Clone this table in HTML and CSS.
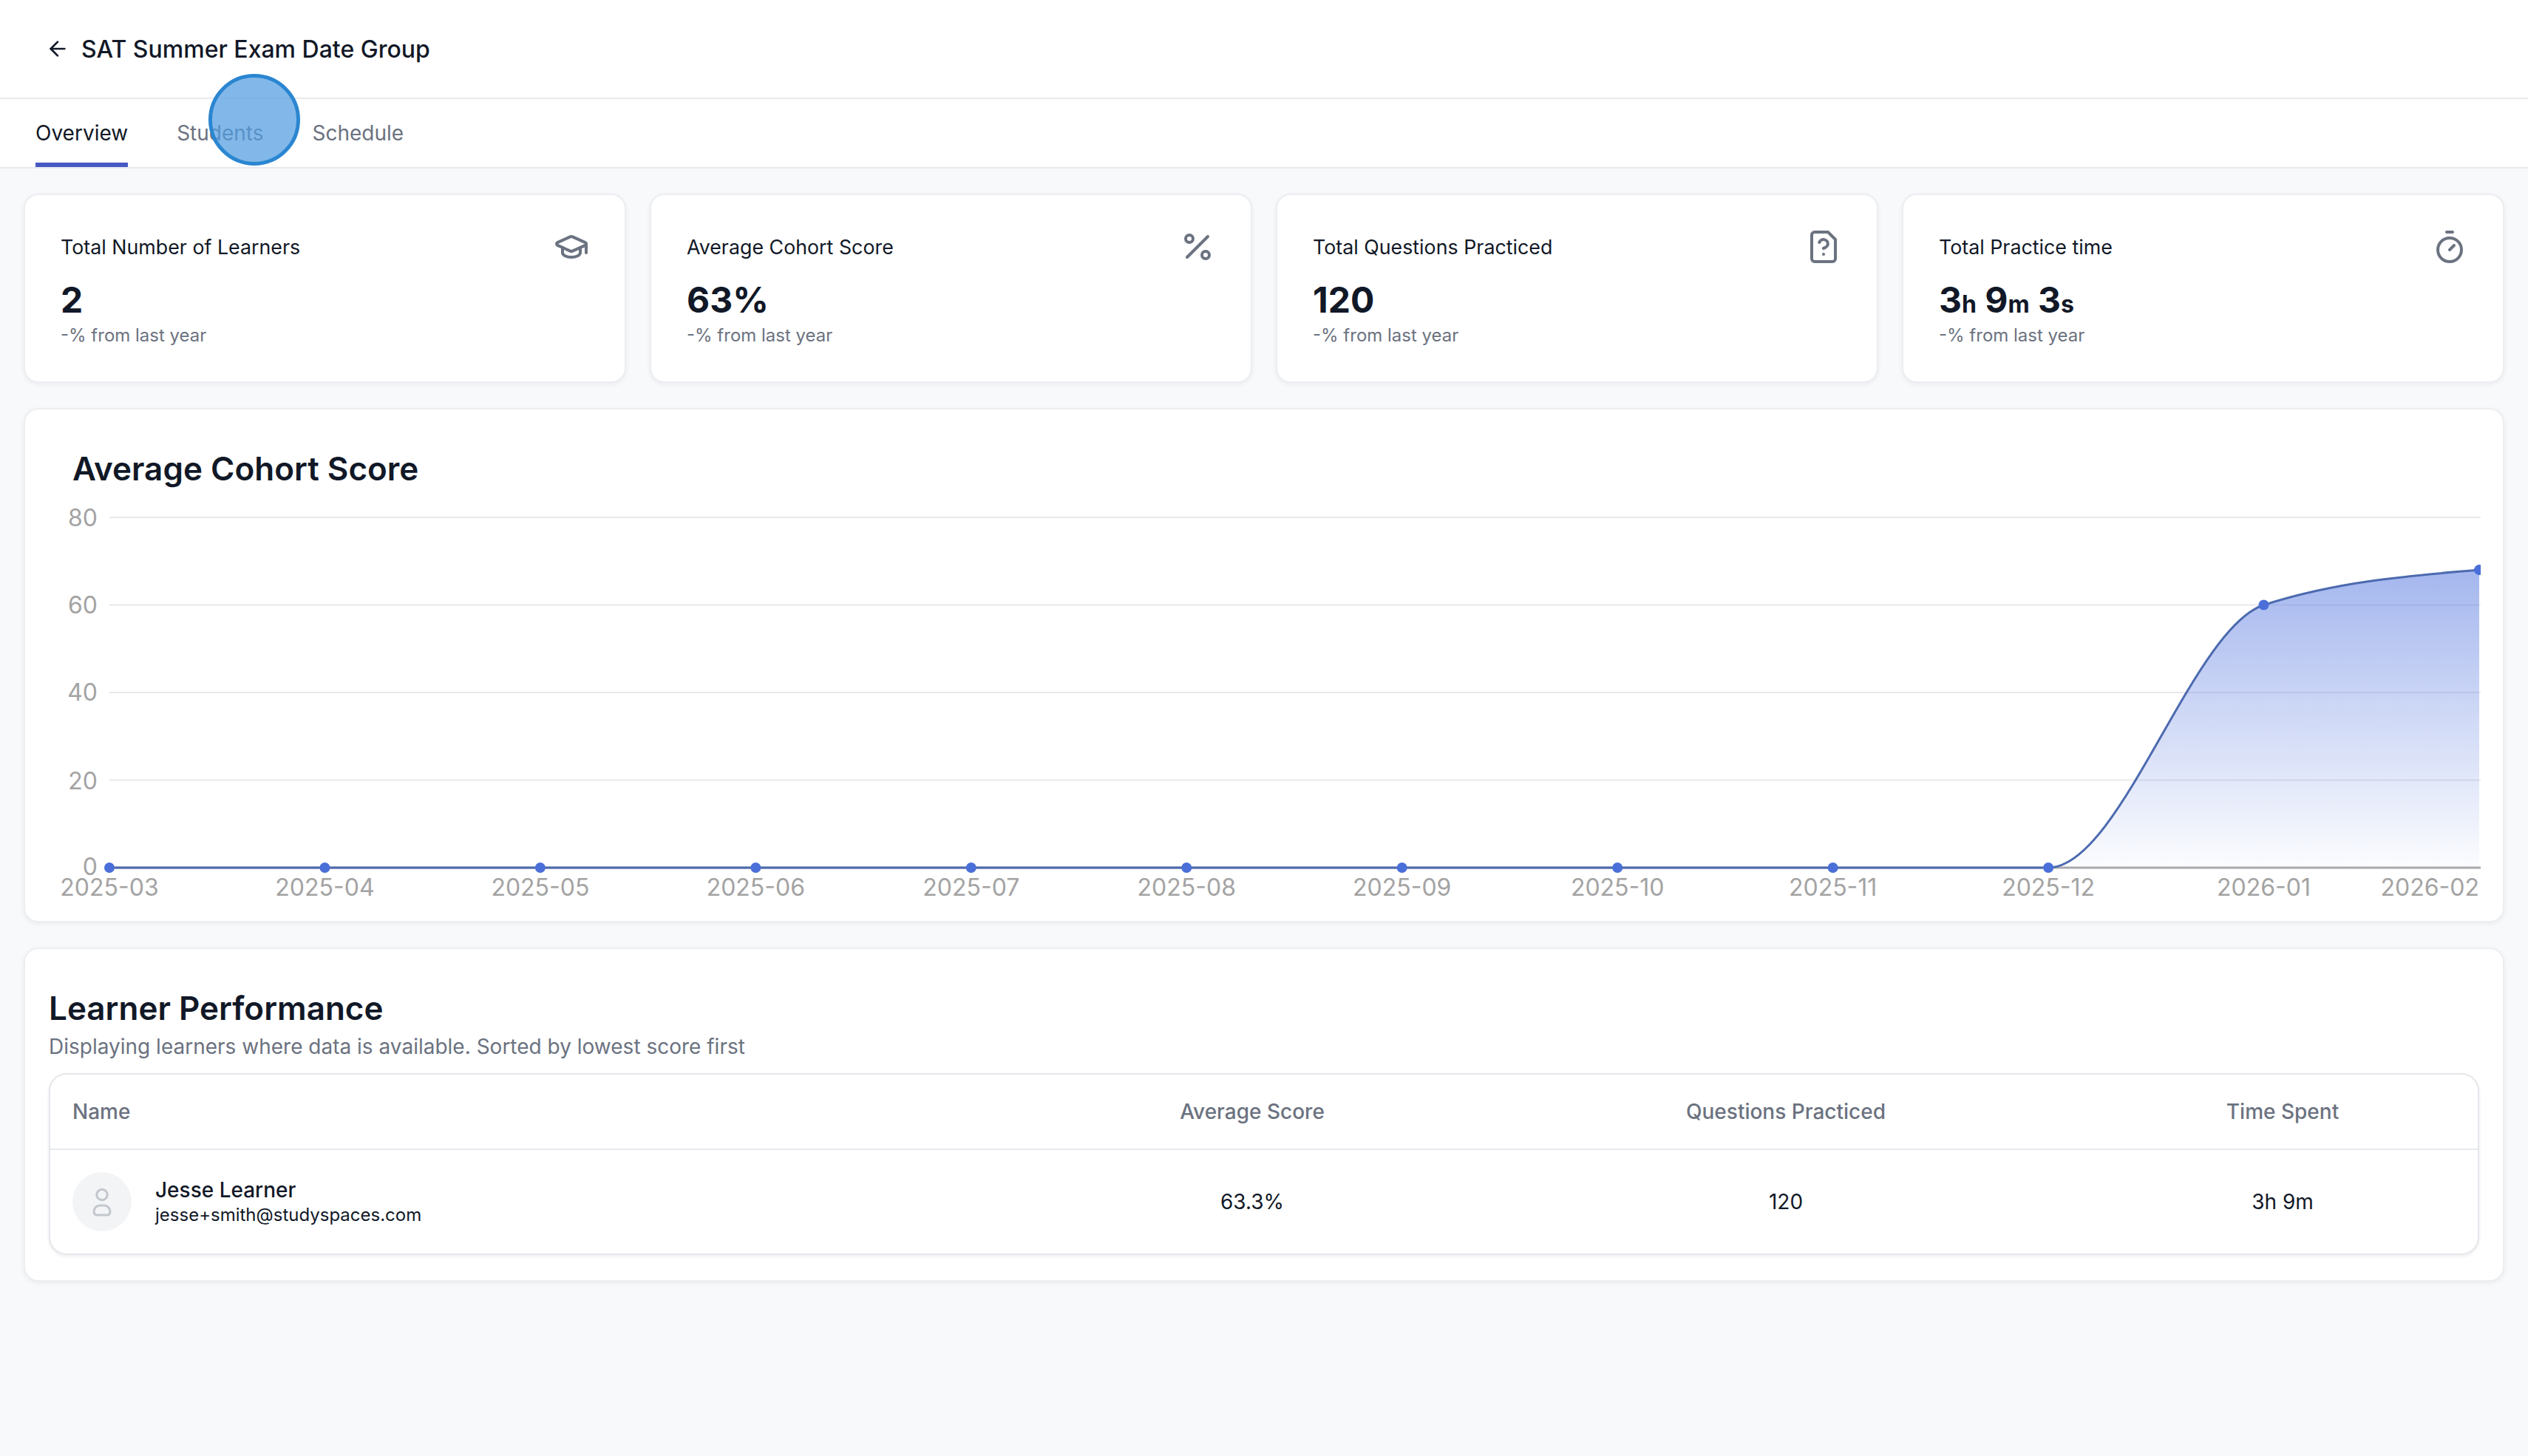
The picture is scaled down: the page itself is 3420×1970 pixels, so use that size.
FILE: index.html
```html
<!DOCTYPE html>
<html lang="en">
<head>
<meta charset="utf-8">
<title>SAT Summer Exam Date Group</title>
<link rel="stylesheet" href="styles.css">
</head>
<body>
<header class="topbar">
  <span class="back">
    <svg viewBox="0 0 24 24" width="16" height="16" fill="none" stroke="currentColor" stroke-width="2" stroke-linecap="round" stroke-linejoin="round"><path d="m12 19-7-7 7-7"/><path d="M19 12H5"/></svg>
  </span>
  <h1 class="page-title">SAT Summer Exam Date Group</h1>
</header>
<nav class="tabs">
  <span class="tab active">Overview</span>
  <span class="tab">Students</span>
  <span class="tab">Schedule</span>
</nav>
<span class="click-dot"></span>

<main class="content">
  <section class="stats">
    <div class="card stat">
      <div class="stat-head">
        <span class="stat-title">Total Number of Learners</span>
        <svg class="stat-icon" viewBox="0 0 24 24" fill="none" stroke="currentColor" stroke-width="2" stroke-linecap="round" stroke-linejoin="round"><path d="M21.42 10.922a1 1 0 0 0-.019-1.838L12.83 5.18a2 2 0 0 0-1.66 0L2.6 9.08a1 1 0 0 0 0 1.832l8.57 3.908a2 2 0 0 0 1.66 0z"/><path d="M22 10v6"/><path d="M6 12.5V16a6 3 0 0 0 12 0v-3.5"/></svg>
      </div>
      <div class="stat-value">2</div>
      <div class="stat-sub">-% from last year</div>
    </div>
    <div class="card stat">
      <div class="stat-head">
        <span class="stat-title">Average Cohort Score</span>
        <svg class="stat-icon" viewBox="0 0 24 24" fill="none" stroke="currentColor" stroke-width="2" stroke-linecap="round" stroke-linejoin="round"><line x1="19" x2="5" y1="5" y2="19"/><circle cx="6.5" cy="6.5" r="2.5"/><circle cx="17.5" cy="17.5" r="2.5"/></svg>
      </div>
      <div class="stat-value">63%</div>
      <div class="stat-sub">-% from last year</div>
    </div>
    <div class="card stat">
      <div class="stat-head">
        <span class="stat-title">Total Questions Practiced</span>
        <svg class="stat-icon" viewBox="0 0 24 24" fill="none" stroke="currentColor" stroke-width="2" stroke-linecap="round" stroke-linejoin="round"><path d="M15 2H6a2 2 0 0 0-2 2v16a2 2 0 0 0 2 2h12a2 2 0 0 0 2-2V7z"/><path d="M9.1 9a3 3 0 0 1 5.82 1c0 2-3 3-3 3"/><path d="M12 17h.01"/></svg>
      </div>
      <div class="stat-value">120</div>
      <div class="stat-sub">-% from last year</div>
    </div>
    <div class="card stat">
      <div class="stat-head">
        <span class="stat-title">Total Practice time</span>
        <svg class="stat-icon" viewBox="0 0 24 24" fill="none" stroke="currentColor" stroke-width="2" stroke-linecap="round" stroke-linejoin="round"><line x1="10" x2="14" y1="2" y2="2"/><line x1="12" x2="15" y1="14" y2="11"/><circle cx="12" cy="14" r="8"/></svg>
      </div>
      <div class="stat-value">3<span class="unit">h</span> 9<span class="unit">m</span> 3<span class="unit">s</span></div>
      <div class="stat-sub">-% from last year</div>
    </div>
  </section>

  <section class="card chart-card">
    <h2 class="chart-title">Average Cohort Score</h2>
    <svg class="chart" viewBox="0 0 1645 280" width="1645" height="280">
      <defs>
        <linearGradient id="areaFill" x1="0" y1="0" x2="0" y2="1">
          <stop offset="0" stop-color="#5a7be0" stop-opacity="0.55"/>
          <stop offset="1" stop-color="#5a7be0" stop-opacity="0.02"/>
        </linearGradient>
      </defs>
      <g class="grid">
        <line x1="41" x2="1645" y1="19" y2="19"/>
        <line x1="41" x2="1645" y1="78.25" y2="78.25"/>
        <line x1="41" x2="1645" y1="137.5" y2="137.5"/>
        <line x1="41" x2="1645" y1="196.75" y2="196.75"/>
      </g>
      <g class="ylabels">
        <text x="33" y="25">80</text>
        <text x="33" y="84">60</text>
        <text x="33" y="143">40</text>
        <text x="33" y="203">20</text>
        <text x="33" y="261">0</text>
      </g>
      <path class="area" d="M1352.55,256 C1401.13,256 1449.69,94.06 1498.27,78.25 C1546.85,62.45 1595.42,58.5 1644,54.55 L1644,256 Z"/>
      <line class="axis" x1="41" x2="1645" y1="256" y2="256"/>
      <path class="line" d="M41,256 L1352.55,256 C1401.13,256 1449.69,94.06 1498.27,78.25 C1546.85,62.45 1595.42,58.5 1644,54.55"/>
      <g class="dots">
        <circle cx="41" cy="256" r="3.5"/>
        <circle cx="186.73" cy="256" r="3.5"/>
        <circle cx="332.45" cy="256" r="3.5"/>
        <circle cx="478.18" cy="256" r="3.5"/>
        <circle cx="623.91" cy="256" r="3.5"/>
        <circle cx="769.64" cy="256" r="3.5"/>
        <circle cx="915.36" cy="256" r="3.5"/>
        <circle cx="1061.09" cy="256" r="3.5"/>
        <circle cx="1206.82" cy="256" r="3.5"/>
        <circle cx="1352.55" cy="256" r="3.5"/>
        <circle cx="1498.27" cy="78.25" r="3.5"/>
        <circle cx="1644" cy="54.55" r="3.5"/>
      </g>
      <g class="xlabels">
        <text x="41" y="275">2025-03</text>
        <text x="186.73" y="275">2025-04</text>
        <text x="332.45" y="275">2025-05</text>
        <text x="478.18" y="275">2025-06</text>
        <text x="623.91" y="275">2025-07</text>
        <text x="769.64" y="275">2025-08</text>
        <text x="915.36" y="275">2025-09</text>
        <text x="1061.09" y="275">2025-10</text>
        <text x="1206.82" y="275">2025-11</text>
        <text x="1352.55" y="275">2025-12</text>
        <text x="1498.27" y="275">2026-01</text>
        <text class="last" x="1644" y="275">2026-02</text>
      </g>
    </svg>
  </section>

  <section class="card perf-card">
    <h2 class="perf-title">Learner Performance</h2>
    <p class="perf-sub">Displaying learners where data is available. Sorted by lowest score first</p>
    <div class="table">
      <div class="row head">
        <div class="cell name-cell">Name</div>
        <div class="cell center">Average Score</div>
        <div class="cell center">Questions Practiced</div>
        <div class="cell center">Time Spent</div>
      </div>
      <div class="row body-row">
        <div class="cell name-cell">
          <span class="avatar">
            <svg viewBox="0 0 20 20" width="24" height="24" fill="none" stroke="currentColor" stroke-width="1.3" stroke-linecap="round" stroke-linejoin="round"><circle cx="10" cy="6" r="3"/><path d="M7 17.5h6a1.5 1.5 0 0 0 1.5-1.5v-.6a3.3 3.3 0 0 0-3.3-3.3H8.8a3.3 3.3 0 0 0-3.3 3.3v.6A1.5 1.5 0 0 0 7 17.5z"/></svg>
          </span>
          <span class="who">
            <span class="who-name">Jesse Learner</span>
            <span class="who-mail">jesse+smith@studyspaces.com</span>
          </span>
        </div>
        <div class="cell center">63.3%</div>
        <div class="cell center">120</div>
        <div class="cell center">3h 9m</div>
      </div>
    </div>
  </section>
</main>
</body>
</html>
```
FILE: styles.css
```css
html {
  zoom: 2;
}

body {
  margin: 0;
  min-height: 985px;
  position: relative;
  font-family: Inter, "Noto Sans", "Liberation Sans", sans-serif;
  background: #f8f9fb;
  color: #111827;
}

.topbar {
  box-sizing: border-box;
  height: 67px;
  background: #fff;
  border-bottom: 1px solid #e8eaee;
  display: flex;
  align-items: center;
  gap: 8px;
  padding-left: 31px;
}

.back {
  display: flex;
  color: #111827;
}

.page-title {
  margin: 0;
  font-size: 16px;
  font-weight: 500;
}

.tabs {
  box-sizing: border-box;
  height: 47px;
  background: #fff;
  border-bottom: 1px solid #e8eaee;
  display: flex;
  gap: 33px;
  padding-left: 24px;
}

.tab {
  box-sizing: border-box;
  display: flex;
  align-items: center;
  padding-top: 3px;
  font-size: 14px;
  color: #6b7280;
  border-bottom: 3px solid transparent;
}

.tab.active {
  color: #111827;
  border-bottom-color: #4659c4;
}

.click-dot {
  position: absolute;
  left: 141px;
  top: 50px;
  width: 62px;
  height: 62px;
  box-sizing: border-box;
  border-radius: 50%;
  background: rgba(82, 156, 225, 0.72);
  border: 2.5px solid #2b86d1;
}

.content {
  padding: 17px 16px 16px;
  display: flex;
  flex-direction: column;
  gap: 17px;
}

.card {
  background: #fff;
  border: 1px solid #eceef1;
  border-radius: 10px;
  box-shadow: 0 1px 3px rgba(16, 24, 40, 0.06);
}

.stats {
  display: grid;
  grid-template-columns: repeat(4, 1fr);
  gap: 16px;
}

.stat {
  padding: 25px 24px 23px;
}

.stat-head {
  display: flex;
  justify-content: space-between;
  align-items: center;
  height: 20px;
}

.stat-title {
  font-size: 13.4px;
  font-weight: 400;
}

.stat-icon {
  width: 24px;
  height: 24px;
  color: #6b7280;
}

.stat-value {
  margin-top: 10px;
  height: 32px;
  font-size: 24px;
  line-height: 32px;
  font-weight: 700;
}

.stat-value .unit {
  font-size: 16px;
  line-height: 0;
}

.stat-sub {
  font-size: 12px;
  line-height: 16px;
  color: #6b7280;
}

.chart-card {
  padding: 24px 16px 12px;
}

.chart-title {
  margin: 0 0 -2px 16px;
  font-size: 22px;
  line-height: 32px;
  font-weight: 600;
}

.chart {
  display: block;
  overflow: hidden;
}

.grid line {
  stroke: #e9e9ec;
  stroke-width: 1;
}

.ylabels text,
.xlabels text {
  font-family: Inter, "Noto Sans", sans-serif;
  font-size: 16px;
  fill: #a3a3a3;
}

.ylabels text {
  text-anchor: end;
}

.xlabels text {
  text-anchor: middle;
}

.xlabels text.last {
  text-anchor: end;
}

.area {
  fill: url(#areaFill);
}

.axis {
  stroke: #a9a9ad;
  stroke-width: 1.5;
}

.line {
  fill: none;
  stroke: #4c6aaf;
  stroke-width: 1.5;
}

.dots circle {
  fill: #4a6fd8;
}

.perf-card {
  padding: 24px 16px 17px;
}

.perf-title {
  margin: 0;
  font-size: 22px;
  line-height: 32px;
  font-weight: 600;
}

.perf-sub {
  margin: 0 0 8px;
  font-size: 14px;
  line-height: 20px;
  color: #6b7280;
}

.table {
  border: 1px solid #e5e7eb;
  border-radius: 12px;
  box-shadow: 0 1px 2px rgba(16, 24, 40, 0.08);
  overflow: hidden;
}

.row {
  display: grid;
  grid-template-columns: 660px 306px 416px 256px 1fr;
  align-items: center;
}

.row.head {
  height: 50px;
  border-bottom: 1px solid #e8eaee;
  font-size: 14px;
  font-weight: 500;
  color: #6b7280;
}

.row.body-row {
  height: 70px;
  font-size: 14px;
  color: #111827;
}

.cell.center {
  text-align: center;
}

.name-cell {
  padding-left: 15px;
  display: flex;
  align-items: center;
  gap: 16px;
}

.avatar {
  width: 40px;
  height: 40px;
  border-radius: 50%;
  background: #f3f4f6;
  color: #c3c7ce;
  display: flex;
  align-items: center;
  justify-content: center;
}

.who {
  display: flex;
  flex-direction: column;
}

.who-name {
  font-size: 14px;
  line-height: 18px;
  font-weight: 500;
}

.who-mail {
  font-size: 12px;
  line-height: 16px;
}
```
